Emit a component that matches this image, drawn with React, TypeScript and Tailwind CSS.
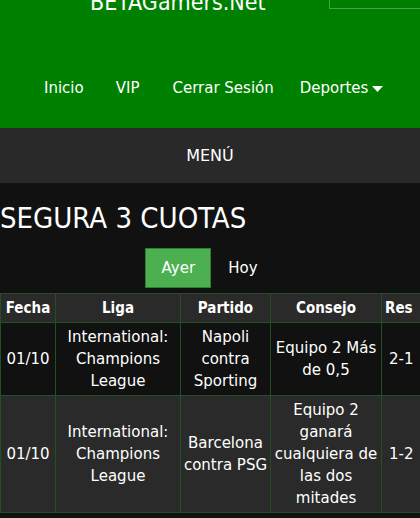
import React from "react";

const rows = [
  {
    fecha: "01/10",
    liga: ["International:", "Champions", "League"],
    partido: ["Napoli", "contra", "Sporting"],
    consejo: ["Equipo 2 Más", "de 0,5"],
    res: "2-1",
    bg: "bg-[#111111]",
  },
  {
    fecha: "01/10",
    liga: ["International:", "Champions", "League"],
    partido: ["Barcelona", "contra PSG"],
    consejo: ["Equipo 2", "ganará", "cualquiera de", "las dos", "mitades"],
    res: "1-2",
    bg: "bg-[#2a2a2a]",
  },
];

const cond = { fontFamily: '"DejaVu Sans Condensed", "DejaVu Sans", sans-serif' };

export default function App() {
  return (
    <div
      className="w-[420px] h-[518px] overflow-hidden bg-[#111111] text-white"
      style={{ fontFamily: '"DejaVu Sans", Verdana, sans-serif' }}
    >
      <header className="bg-[#008000] h-[128px] flex flex-col overflow-hidden">
        <div className="flex items-start h-[40px] shrink-0">
          <div className="pl-[90px] text-[23px] leading-[24px] mt-[-10px]" style={cond}>
            BETAGamers.Net
          </div>
          <div className="ml-auto w-[91px] h-[10px] mt-[-1px] border border-[#4d9e4d] border-r-0"></div>
        </div>
        <nav className="flex items-center h-[88px] pt-[8px] shrink-0 pl-[44px] text-[15px]">
          <span>Inicio</span>
          <span className="ml-[32px]">VIP</span>
          <span className="ml-[33px]">Cerrar Sesión</span>
          <span className="ml-[26px] flex items-center">
            Deportes
            <svg width="11" height="6" viewBox="0 0 11 6" className="ml-[4px] mt-[1px]">
              <path d="M0 0 L11 0 L5.5 6 Z" fill="white" />
            </svg>
          </span>
        </nav>
      </header>
      <div className="bg-[#292929] h-[55px] flex items-center justify-center text-[16px]">MENÚ</div>
      <h1 className="text-[29px] leading-[36px] mt-[17px] pl-0" style={cond}>
        SEGURA 3 CUOTAS
      </h1>
      <div className="flex justify-center items-center mt-[12px] pr-[17px] text-[15px]">
        <div className="w-[66px] h-[40px] bg-[#4caf50] border border-[#2f7d32] flex items-center justify-center">
          Ayer
        </div>
        <div className="ml-[17px]">Hoy</div>
      </div>
      <table className="mt-[5px] border-collapse text-[15px] leading-[22px] text-center w-[440px] table-fixed">
        <colgroup>
          <col className="w-[55px]" />
          <col className="w-[125px]" />
          <col className="w-[90px]" />
          <col className="w-[111px]" />
          <col className="w-[59px]" />
        </colgroup>
        <thead>
          <tr className="bg-[#2a2a2a]">
            {["Fecha", "Liga", "Partido", "Consejo", "Res"].map((h, i) => (
              <th
                key={h}
                className={`border border-[#234f23] py-[3px] font-bold ${i === 4 ? "text-left pl-[3px]" : ""}`}
                style={cond}
              >
                {h}
              </th>
            ))}
          </tr>
        </thead>
        <tbody>
          {rows.map((r, idx) => (
            <tr key={idx} className={r.bg}>
              <td className="border border-[#234f23] py-[3px]">{r.fecha}</td>
              <td className="border border-[#234f23] py-[3px]">
                {r.liga.map((l) => (
                  <div key={l}>{l}</div>
                ))}
              </td>
              <td className="border border-[#234f23] py-[3px]">
                {r.partido.map((l) => (
                  <div key={l}>{l}</div>
                ))}
              </td>
              <td className="border border-[#234f23] py-[3px]">
                {r.consejo.map((l) => (
                  <div key={l}>{l}</div>
                ))}
              </td>
              <td className="border border-[#234f23] py-[3px] text-left pl-[7px]">{r.res}</td>
            </tr>
          ))}
        </tbody>
      </table>
    </div>
  );
}
